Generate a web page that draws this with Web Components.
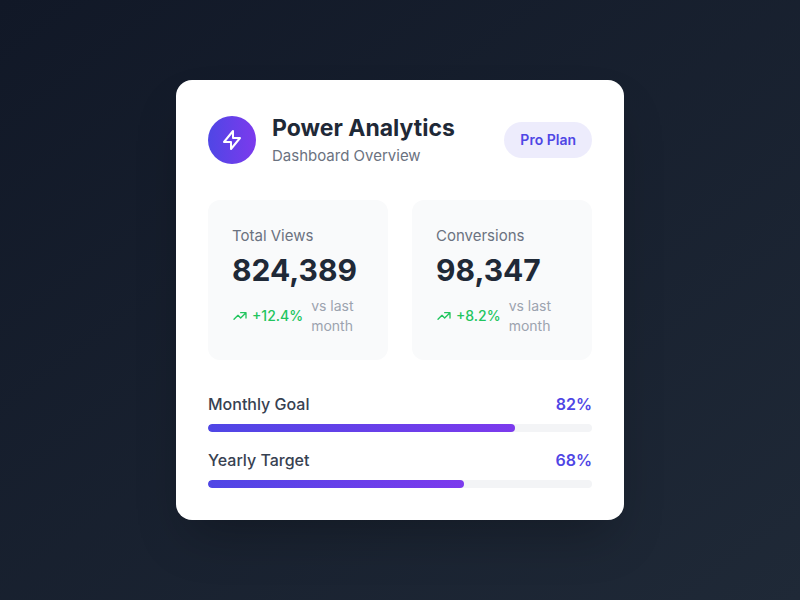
<!DOCTYPE html>
<html lang="en">
<head>
<meta charset="utf-8">
<meta name="viewport" content="width=device-width, initial-scale=1">
<title>Power Analytics</title>
<style>
body{margin:0;font-family:Inter,"Liberation Sans",sans-serif;font-size:16px;line-height:24px;color:#1f2937;}
</style>
</head>
<body>
<analytics-page>
  <analytics-card>
    <card-header slot="header" heading="Power Analytics" subtitle="Dashboard Overview">Pro Plan</card-header>
    <stat-tile slot="stats" label="Total Views" value="824,389" change="+12.4%">vs last month</stat-tile>
    <stat-tile slot="stats" label="Conversions" value="98,347" change="+8.2%">vs last month</stat-tile>
    <goal-meter slot="goals" value="82" fill="4 / 5">Monthly Goal</goal-meter>
    <goal-meter slot="goals" value="68" fill="2 / 3">Yearly Target</goal-meter>
  </analytics-card>
</analytics-page>
<script>
const mount = (el, html) => { el.attachShadow({mode: 'open'}).innerHTML = html; };

customElements.define('analytics-page', class extends HTMLElement {
  connectedCallback() {
    mount(this, `<style>
      :host{display:flex;align-items:center;justify-content:center;min-height:100vh;box-sizing:border-box;padding:16px;
        background:linear-gradient(to bottom right,#111827,#1f2937);}
    </style><slot></slot>`);
  }
});

customElements.define('analytics-card', class extends HTMLElement {
  connectedCallback() {
    mount(this, `<style>
      :host{display:block;box-sizing:border-box;width:100%;max-width:448px;padding:32px;background:#fff;border-radius:16px;
        box-shadow:0 25px 50px -12px rgba(0,0,0,.25);}
      .stats{display:grid;grid-template-columns:1fr 1fr;gap:24px;margin:32px 0;}
      .goals{display:grid;gap:16px;}
    </style>
    <slot name="header"></slot>
    <div class="stats"><slot name="stats"></slot></div>
    <div class="goals"><slot name="goals"></slot></div>`);
  }
});

customElements.define('card-header', class extends HTMLElement {
  connectedCallback() {
    mount(this, `<style>
      :host{display:flex;align-items:center;justify-content:space-between;}
      .brand{display:flex;align-items:center;gap:16px;}
      .icon{display:flex;align-items:center;justify-content:center;width:48px;height:48px;border-radius:50%;
        background:linear-gradient(to right,#4f46e5,#7c3aed);}
      h1{margin:0;font-size:23px;line-height:32px;font-weight:700;}
      p{margin:0;font-size:15px;color:#6b7280;}
      .badge{padding:8px 16px;border-radius:18px;background:rgba(79,70,229,.1);color:#4f46e5;font-size:14px;line-height:20px;font-weight:600;}
    </style>
    <div class="brand">
      <div class="icon"><svg width="24" height="24" viewBox="0 0 24 24" fill="none" stroke="#fff" stroke-width="2" stroke-linecap="round" stroke-linejoin="round" aria-hidden="true"><path d="M13 10V3L4 14h7v7l9-11h-7z"/></svg></div>
      <div><h1>${this.getAttribute('heading')}</h1><p>${this.getAttribute('subtitle')}</p></div>
    </div>
    <span class="badge"><slot></slot></span>`);
  }
});

customElements.define('stat-tile', class extends HTMLElement {
  connectedCallback() {
    mount(this, `<style>
      :host{display:block;padding:24px;border-radius:12px;background:#f9fafb;}
      .label{font-size:15px;color:#6b7280;}
      .value{margin-top:4px;font-size:30px;line-height:36px;font-weight:700;}
      .trend{display:flex;align-items:center;gap:8px;margin-top:8px;font-size:14px;line-height:20px;}
      .change{display:flex;align-items:center;gap:4px;color:#22c55e;font-weight:500;}
      .note{color:#9ca3af;}
      svg{flex:none;}
    </style>
    <div class="label">${this.getAttribute('label')}</div>
    <div class="value">${this.getAttribute('value')}</div>
    <div class="trend">
      <span class="change"><svg width="16" height="16" viewBox="0 0 24 24" fill="none" stroke="currentColor" stroke-width="2" stroke-linecap="round" stroke-linejoin="round" aria-hidden="true"><path d="M13 7h8m0 0v8m0-8l-8 8-4-4-6 6"/></svg>${this.getAttribute('change')}</span>
      <span class="note"><slot></slot></span>
    </div>`);
  }
});

customElements.define('goal-meter', class extends HTMLElement {
  connectedCallback() {
    const v = this.getAttribute('value');
    mount(this, `<style>
      :host{display:block;}
      .row{display:flex;justify-content:space-between;margin-bottom:8px;}
      #name{color:#374151;font-weight:500;}
      .pct{color:#4f46e5;font-weight:600;}
      .track{height:8px;border-radius:4px;background:#f3f4f6;overflow:hidden;}
      .fill{height:100%;width:calc(100% * ${this.getAttribute('fill')});border-radius:4px;background:linear-gradient(to right,#4f46e5,#7c3aed);}
    </style>
    <div class="row"><span id="name"><slot></slot></span><span class="pct">${v}%</span></div>
    <div class="track" role="progressbar" aria-labelledby="name" aria-valuemin="0" aria-valuemax="100" aria-valuenow="${v}"><div class="fill"></div></div>`);
  }
});
</script>
</body>
</html>
